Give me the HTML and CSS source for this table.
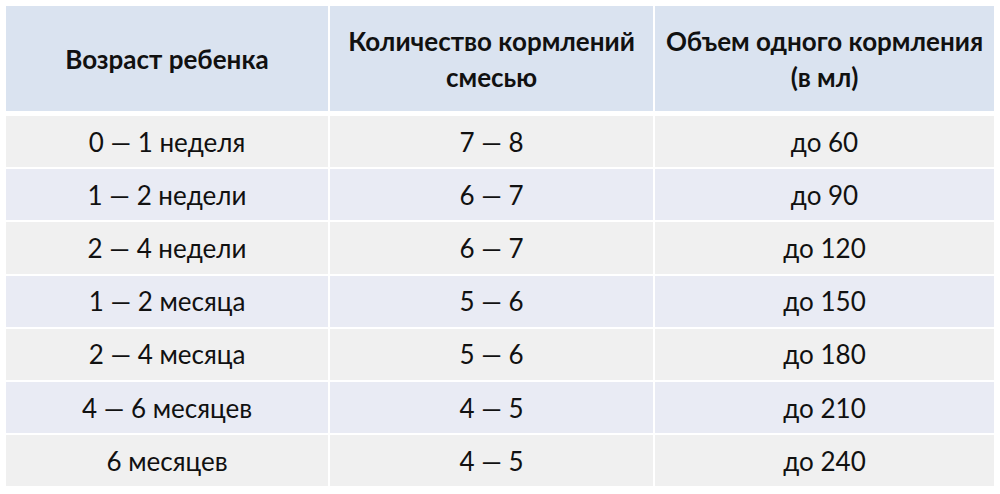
FILE: index.html
```html
<!DOCTYPE html>
<html lang="ru">
<head>
<meta charset="utf-8">
<title>Таблица кормления</title>
<link rel="stylesheet" href="styles.css">
</head>
<body>
<div class="table">
  <div class="cell head">Возраст ребенка</div>
  <div class="cell head">Количество кормлений<br>смесью</div>
  <div class="cell head">Объем одного кормления<br>(в мл)</div>

  <div class="cell odd">0 — 1 неделя</div>
  <div class="cell odd">7 — 8</div>
  <div class="cell odd">до 60</div>

  <div class="cell even">1 — 2 недели</div>
  <div class="cell even">6 — 7</div>
  <div class="cell even">до 90</div>

  <div class="cell odd">2 — 4 недели</div>
  <div class="cell odd">6 — 7</div>
  <div class="cell odd">до 120</div>

  <div class="cell even">1 — 2 месяца</div>
  <div class="cell even">5 — 6</div>
  <div class="cell even">до 150</div>

  <div class="cell odd">2 — 4 месяца</div>
  <div class="cell odd">5 — 6</div>
  <div class="cell odd">до 180</div>

  <div class="cell even">4 — 6 месяцев</div>
  <div class="cell even">4 — 5</div>
  <div class="cell even">до 210</div>

  <div class="cell odd">6 месяцев</div>
  <div class="cell odd">4 — 5</div>
  <div class="cell odd">до 240</div>
</div>
</body>
</html>
```

FILE: styles.css
```css
html, body {
  margin: 0;
  padding: 0;
  background: #ffffff;
}

body {
  padding: 6px;
  font-family: Lato, "Open Sans", "Liberation Sans", sans-serif;
  color: #111111;
}

.table {
  display: grid;
  grid-template-columns: 322px 323px 339px;
  grid-template-rows: 108px repeat(7, 51.2px);
  column-gap: 2px;
  row-gap: 2px;
}

.cell {
  display: flex;
  align-items: center;
  justify-content: center;
  text-align: center;
  font-size: 26px;
  line-height: 1;
}

.head {
  background: #dae3f0;
  font-weight: bold;
  line-height: 36px;
  margin-bottom: 3px;
}

.odd {
  background: #f0f0f0;
}

.even {
  background: #e9ebf4;
}
```
